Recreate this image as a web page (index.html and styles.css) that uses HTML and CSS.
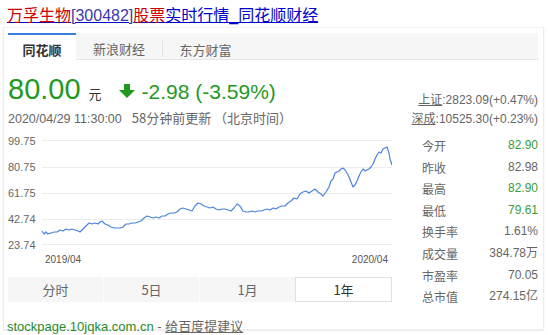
FILE: index.html
```html
<!DOCTYPE html>
<html lang="zh-CN">
<head>
<meta charset="utf-8">
<title>万孚生物[300482]股票实时行情_同花顺财经</title>
<link rel="stylesheet" href="styles.css">
</head>
<body>
<h3 class="title"><a href="#"><em>万孚生物</em><span class="code">[300482]</span><em>股票</em>实时行情_同花顺财经</a></h3>
<div class="card">
  <div class="tabs">
    <div class="tab tab-active">同花顺</div>
    <div class="tab tab-2">新浪财经</div>
    <div class="tab tab-3">东方财富</div>
  </div>
  <div class="body">
    <div class="left">
      <div class="quote">
        <span class="price">80.00</span>
        <span class="unit">元</span>
        <svg class="arrow" width="16" height="14" viewBox="0 0 16 14"><path d="M5 0H11V6H16L8 14L0 6H5Z" fill="#1f9a1f"/></svg>
        <span class="change">-2.98 (-3.59%)</span>
      </div>
      <div class="time">2020/04/29 11:30:00<span class="upd">58分钟前更新 （北京时间）</span></div>
      <svg class="chart" width="384" height="140" viewBox="8 130 384 140">
        <g stroke="#ececec" stroke-width="1">
          <line x1="42" y1="139.5" x2="392" y2="139.5"/>
          <line x1="42" y1="166.5" x2="392" y2="166.5"/>
          <line x1="42" y1="192.5" x2="392" y2="192.5"/>
          <line x1="42" y1="218.5" x2="392" y2="218.5"/>
          <line x1="42" y1="243.5" x2="392" y2="243.5"/>
        </g>
        <g class="ylab" font-size="11" fill="#666">
          <text x="8" y="144">99.75</text>
          <text x="8" y="170">80.75</text>
          <text x="8" y="196">61.75</text>
          <text x="8" y="222">42.74</text>
          <text x="8" y="248">23.74</text>
        </g>
        <g class="xlab" font-size="10" fill="#555">
          <text x="45" y="262">2019/04</text>
          <text x="388" y="262" text-anchor="end">2020/04</text>
        </g>
        <polyline fill="none" stroke="#4a84e0" stroke-width="1.2" stroke-linejoin="round" points="42,230 44,233 46,231 48,233 51,232 54,231 57,231 60,229 63,230 66,228 69,229 72,228 75,229 78,230 80,231 83,228 86,225 89,222 92,223 95,222 98,223 100,221 102,220 105,223 108,224 111,226 114,227 117,227 120,227 123,226 126,223 129,223 132,222 135,222 138,221 141,220 144,217 147,215 150,216 153,217 156,216 159,217 162,215 165,215 168,213 171,212 174,212 177,211 180,208 183,207 186,208 189,209 192,210 195,205 198,202 201,203 204,205 207,206 210,207 213,206 216,208 219,209 222,208 225,208 228,209 231,210 234,207 237,203 240,205 243,210 246,211 249,211 252,210 255,211 258,210 261,210 264,209 267,208 270,209 273,207 276,208 279,206 282,205 285,205 288,202 291,200 294,197 297,198 300,193 303,191 306,190 309,192 312,190 315,188 318,191 321,193 323,195 326,191 329,186 331,180 333,178 335,172 337,171 339,170 341,168 343,167 345,169 347,172 349,176 351,181 353,186 355,184 357,180 359,175 361,171 363,168 365,170 367,169 369,168 371,166 373,163 375,158 377,154 379,151 381,152 383,148 385,147 387,146 389,152 390,158 392,164"/>
      </svg>
      <div class="periods">
        <div class="period">分时</div>
        <div class="period">5日</div>
        <div class="period">1月</div>
        <div class="period period-active">1年</div>
      </div>
    </div>
    <div class="right">
      <div class="index"><a href="#">上证</a>:2823.09(+0.47%)</div>
      <div class="index"><a href="#">深成</a>:10525.30(+0.23%)</div>
      <div class="stats">
        <div class="row"><span class="k">今开</span><span class="v green">82.90</span></div>
        <div class="row"><span class="k">昨收</span><span class="v">82.98</span></div>
        <div class="row"><span class="k">最高</span><span class="v green">82.90</span></div>
        <div class="row"><span class="k">最低</span><span class="v green">79.61</span></div>
        <div class="row"><span class="k">换手率</span><span class="v">1.61%</span></div>
        <div class="row"><span class="k">成交量</span><span class="v">384.78万</span></div>
        <div class="row"><span class="k">市盈率</span><span class="v">70.05</span></div>
        <div class="row"><span class="k">总市值</span><span class="v">274.15亿</span></div>
      </div>
    </div>
  </div>
  <div class="footer"><span class="site">stockpage.10jqka.com.cn</span> - <a href="#">给百度提建议</a></div>
</div>
</body>
</html>
```
FILE: styles.css
```css
html, body {
  margin: 0;
  padding: 0;
  background: #fff;
}
body {
  font-family: "Liberation Sans", Arial, "Noto Sans CJK SC", sans-serif;
  color: #333;
  width: 548px;
  height: 335px;
  overflow: hidden;
}
.title {
  margin: 0;
  padding: 5px 0 0 7px;
  height: 22px;
  font-size: 16px;
  line-height: 22px;
  font-weight: normal;
  white-space: nowrap;
}
.title a {
  color: #0000cc;
  text-decoration: underline;
}
.title em {
  font-style: normal;
  color: #cc0000;
}
.title .code {
  color: #3a3aa8;
}
.card {
  margin-left: 3px;
  width: 541px;
  height: 303px;
  box-sizing: border-box;
  border: 1px solid #ececec;
  border-top-color: #f2f2f2;
  box-shadow: 0 1px 2px rgba(0,0,0,0.08);
  padding: 5px 5px 0 4px;
}
.tabs {
  display: flex;
  height: 26px;
  background: #f6f6f6;
  border-bottom: 1px solid #e6e6e6;
  font-family: "Noto Sans CJK SC", sans-serif;
  font-size: 13px;
  color: #666;
}
.tab {
  display: flex;
  align-items: center;
  justify-content: center;
  height: 26px;
  padding-top: 5px;
  box-sizing: border-box;
}
.tab-active {
  width: 68px;
  background: #fff;
  border-top: 2px solid #3a7de0;
  padding-top: 4px;
  height: 27px;
  color: #333;
  font-weight: bold;
}
.tab-2 {
  width: 86px;
}
.tab-3 {
  width: 86px;
  border-left: 1px solid #e2e2e2;
  height: 16px;
  margin-top: 8px;
  padding-top: 0;
}
.body {
  display: flex;
  justify-content: space-between;
}
.left {
  width: 384px;
}
.quote {
  display: flex;
  align-items: baseline;
  height: 30px;
  margin-top: 14px;
  color: #1f9a1f;
}
.price {
  font-size: 29px;
  line-height: 30px;
}
.unit {
  font-family: "Noto Sans CJK SC", sans-serif;
  font-size: 13px;
  color: #333;
  margin-left: 8px;
}
.arrow {
  margin-left: 17px;
  align-self: center;
  margin-top: 4px;
}
.change {
  font-size: 21px;
  margin-left: 7px;
}
.time {
  margin-top: 6px;
  font-size: 12.5px;
  line-height: 16px;
  color: #666;
  white-space: nowrap;
}
.upd {
  font-family: "Noto Sans CJK SC", sans-serif;
  font-size: 13px;
  margin-left: 10px;
}
.chart {
  display: block;
  margin-top: 4px;
  font-family: "Liberation Sans", Arial, sans-serif;
}
.periods {
  display: flex;
  margin-top: 6px;
  height: 25px;
  background: #f6f6f6;
  font-family: "Noto Sans CJK SC", sans-serif;
  font-size: 13px;
  color: #666;
}
.period {
  flex: 1;
  display: flex;
  align-items: center;
  justify-content: center;
  border-left: 1px solid #fdfdfd;
}
.period:first-child {
  border-left: 0;
}
.period-active {
  background: #fff;
  border: 1px solid #e0e0e0;
  color: #333;
}
.right {
  width: 130px;
  padding-top: 30px;
  font-size: 12px;
  color: #666;
}
.index {
  text-align: right;
  line-height: 17px;
  white-space: nowrap;
}
.index a {
  font-family: "Noto Sans CJK SC", sans-serif;
  color: #666;
  text-decoration: underline;
}
.stats {
  margin-top: 7px;
  padding-left: 14px;
}
.row {
  display: flex;
  justify-content: space-between;
  height: 21.6px;
  line-height: 21.6px;
}
.k {
  font-family: "Noto Sans CJK SC", sans-serif;
  color: #666;
}
.v {
  color: #666;
}
.green {
  color: #3a9b3a;
}
.footer {
  margin-top: 9px;
  font-size: 13px;
  line-height: 18px;
  color: #666;
  margin-left: -1px;
}
.site {
  color: #2b8a2b;
}
.footer a {
  font-family: "Noto Sans CJK SC", sans-serif;
  color: #666;
  text-decoration: underline;
}
```
